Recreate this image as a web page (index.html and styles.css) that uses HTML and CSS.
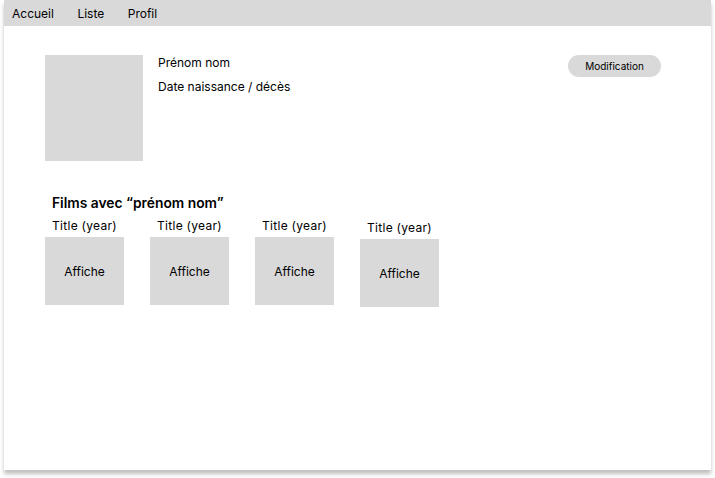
FILE: index.html
```html
<!DOCTYPE html>
<html lang="fr">
<head>
<meta charset="utf-8">
<link rel="stylesheet" href="styles.css">
</head>
<body>
<div class="frame">
  <nav class="nav">
    <span>Accueil</span>
    <span>Liste</span>
    <span>Profil</span>
  </nav>
  <main class="content">
    <section class="person">
      <div class="photo"></div>
      <div class="info">
        <p>Prénom nom</p>
        <p>Date naissance / décès</p>
      </div>
      <button class="edit">Modification</button>
    </section>
    <section class="films">
      <h2>Films avec “prénom nom”</h2>
      <div class="list">
        <div class="film"><p>Title (year)</p><div class="poster">Affiche</div></div>
        <div class="film"><p>Title (year)</p><div class="poster">Affiche</div></div>
        <div class="film"><p>Title (year)</p><div class="poster">Affiche</div></div>
        <div class="film low"><p>Title (year)</p><div class="poster">Affiche</div></div>
      </div>
    </section>
  </main>
</div>
</body>
</html>
```
FILE: styles.css
```css
* { box-sizing: border-box; }
html, body { margin: 0; padding: 0; background: #ffffff; }
body {
  font-family: Inter, "Noto Sans", sans-serif;
  color: #000;
  font-size: 12px;
  width: 715px;
  height: 478px;
  overflow: hidden;
}
.frame {
  margin-left: 4px;
  width: 707px;
  height: 470px;
  background: #fff;
  box-shadow: 0 4px 4px rgba(0,0,0,0.25);
  display: flex;
  flex-direction: column;
}
.nav {
  height: 26px;
  background: #d9d9d9;
  display: flex;
  align-items: center;
  gap: 23.5px;
  padding-left: 8px;
  font-size: 12px;
  line-height: 15px;
}
.content {
  padding: 29px 50px 0 41px;
}
.person {
  display: flex;
  align-items: flex-start;
}
.photo {
  width: 98px;
  height: 106px;
  background: #d9d9d9;
}
.info {
  margin-left: 15px;
  flex: 1;
}
.info p {
  margin: 0 0 9px;
  line-height: 15px;
}
.edit {
  width: 93px;
  height: 22px;
  border: none;
  border-radius: 11px;
  background: #d9d9d9;
  font-family: Inter, "Noto Sans", sans-serif;
  font-size: 10px;
  color: #000;
  padding: 0;
}
.films {
  margin-top: 34px;
}
.films h2 {
  margin: 0 0 6px 7px;
  font-size: 13.8px;
  font-weight: 600;
  line-height: 17px;
}
.list {
  display: flex;
  gap: 26px;
  align-items: flex-start;
}
.film {
  width: 79px;
  display: flex;
  flex-direction: column;
  align-items: center;
}
.film.low { margin-top: 2px; }
.film p {
  margin: 0 0 4px;
  line-height: 15px;
  letter-spacing: 0.3px;
  white-space: nowrap;
}
.poster {
  width: 79px;
  height: 68px;
  background: #d9d9d9;
  display: flex;
  align-items: center;
  justify-content: center;
}
```
